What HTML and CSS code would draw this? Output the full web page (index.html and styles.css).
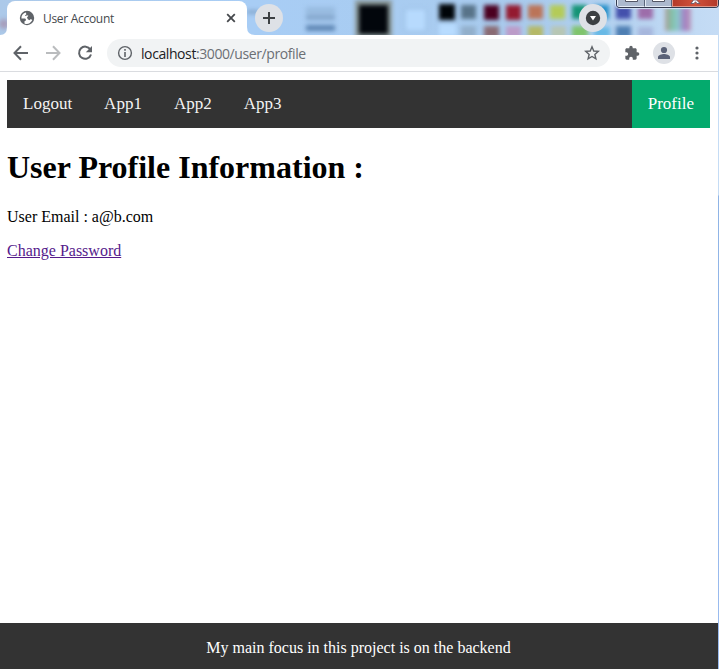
FILE: index.html
```html
<!DOCTYPE html>
<html lang="en">
<head>
<meta charset="utf-8">
<title>User Account</title>
<link rel="stylesheet" href="styles.css">
</head>
<body>
<div class="window">
  <header class="tabstrip">
    <svg class="glass" width="719" height="35" viewBox="0 0 719 35" aria-hidden="true">
      <defs>
        <linearGradient id="sky"><stop offset="0" stop-color="#acc9e9"/><stop offset=".35" stop-color="#a8cdf5"/><stop offset=".75" stop-color="#a9cbed"/><stop offset="1" stop-color="#c5dcf5"/></linearGradient>
        <linearGradient id="rainbow"><stop offset="0" stop-color="#b09c9a"/><stop offset=".25" stop-color="#83c0a5"/><stop offset=".5" stop-color="#8cc9cf"/><stop offset=".75" stop-color="#a37fc4"/><stop offset="1" stop-color="#bc9ab7"/></linearGradient>
        <filter id="soft" x="-20%" y="-50%" width="140%" height="200%" color-interpolation-filters="sRGB"><feGaussianBlur stdDeviation="2"/></filter>
      </defs>
      <rect width="719" height="35" fill="url(#sky)"/>
      <g filter="url(#soft)">
        <circle cx="4" cy="24" r="5" fill="#a89ebb"/>
        <rect x="247" y="10" width="12" height="4" fill="#86a8ce"/>
        <rect x="306" y="7" width="29" height="14" fill="#98bbe0"/>
        <rect x="306" y="16" width="29" height="3" fill="#7d9fc6"/>
        <rect x="306" y="25" width="29" height="6" fill="#6088b5"/>
        <rect x="355" y="0" width="37" height="38" fill="#8c9999"/>
        <rect x="405" y="9" width="21" height="22" fill="#b7dafd" stroke="#97bbe1"/>
        <rect x="439" y="24" width="17" height="12" fill="#b8dcff"/>
        <rect x="461" y="26" width="15" height="12" fill="#92afcb"/>
        <rect x="484" y="26" width="15" height="12" fill="#8a6a73"/>
        <rect x="506" y="26" width="15" height="12" fill="#bc9bc8"/>
        <rect x="528" y="26" width="15" height="12" fill="#b5b866"/>
        <rect x="551" y="26" width="15" height="12" fill="#b7c6b4"/>
        <rect x="572" y="26" width="16" height="12" fill="#80c46c"/>
        <rect x="594" y="27" width="16" height="11" fill="#68b9e6"/>
        <rect x="616" y="26" width="15" height="12" fill="#4e7eb2"/>
        <rect x="638" y="27" width="15" height="11" fill="#a6b6dc"/>
        <rect x="461" y="5" width="15" height="14" fill="#587389"/>
        <rect x="528" y="5" width="15" height="14" fill="#bb7458"/>
        <rect x="550" y="5" width="15" height="14" fill="#b4cb58"/>
        <rect x="572" y="5" width="15" height="14" fill="#159476"/>
        <rect x="594" y="5" width="15" height="14" fill="#258fc8"/>
        <rect x="616" y="5" width="15" height="14" fill="#4450ac"/>
        <rect x="638" y="5" width="15" height="14" fill="#9d6daa"/>
        <rect x="665" y="7" width="26" height="24" fill="url(#rainbow)"/>
      </g>
      <g filter="url(#soft)">
        <rect x="359" y="5" width="29" height="29" fill="#02060c"/>
        <rect x="439" y="4" width="16" height="16" fill="#000509"/>
        <rect x="484" y="5" width="15" height="15" fill="#4b0020"/>
        <rect x="506" y="5" width="15" height="15" fill="#941a30"/>
      </g>
    </svg>
    <div class="tab">
      <svg class="globe" width="16" height="16" viewBox="0 0 16 16"><circle cx="8" cy="8" r="7.200" fill="#5f6368"/><path d="M7 2.500C4 2.900 2.300 5.200 2.400 8.400l3.500.1c1 .3 1.200 1.200 1 2.100l-1.400.7v2.100c1.500.8 3.600.7 5-.1 1.200-.8 2.100-1.700 2.800-3.200L11.800 9l-1.300 1.200-1.700-1L8 7.500l1.400-1.700-1.300-.6-1.500.9-.7-.8 1.400-.8z" fill="#fff"/></svg>
      <span class="tab-title">User Account</span>
      <svg class="close" width="10" height="10" viewBox="0 0 10 10"><path d="m1.200 1.200 7.600 7.600m0-7.600L1.200 8.800" stroke="#45484c" stroke-width="1.800"/></svg>
    </div>
    <svg class="curves" width="264" height="8" viewBox="0 0 264 8"><path d="M0 8q7 0 7-8v8zM247 0q0 8 8 8h-8z" fill="#fff"/></svg>
    <div class="new-tab"><svg width="14" height="14" viewBox="0 0 14 14"><path d="M7 1v12M1 7h12" stroke="#3c4043" stroke-width="2"/></svg></div>
    <div class="search-tabs"><svg width="16" height="16" viewBox="0 0 16 16"><circle cx="8" cy="8" r="7.200" fill="#3c4043"/><path d="M5 6h6l-3 4.600z" fill="#fff"/></svg></div>
    <div class="caption"><span class="min"><svg width="13" height="3"><path d="M.5 0v1.500h12V0" fill="#fff" stroke="#535665"/></svg></span><span class="max"><svg width="13" height="3"><path d="M.5 0v1.500h12V0" fill="#fff" stroke="#535665"/></svg></span><span class="exit"><svg width="13" height="4"><path d="M2 3.500 4.500 0h3L11 3.500H8L6.500 1.700 5 3.500z" fill="#fff" stroke="#5a5366" stroke-width=".8"/></svg></span></div>
  </header>
  <div class="toolbar">
    <svg class="back" width="16" height="16" viewBox="0 0 16 16"><path d="M15 8H2M8 1.300 1.500 8 8 14.700" fill="none" stroke="#5f6368" stroke-width="2"/></svg>
    <svg class="forward" width="16" height="16" viewBox="0 0 16 16"><path d="M1 8h13M8 1.300 14.500 8 8 14.700" fill="none" stroke="#babcbe" stroke-width="2"/></svg>
    <svg class="reload" width="16" height="16" viewBox="0 0 16 16"><path d="M13.300 4.400A6.100 6.100 0 1 0 14 9.500" fill="none" stroke="#5f6368" stroke-width="2"/><path d="M15 1v6.300H8.800z" fill="#5f6368"/></svg>
    <div class="address">
      <svg class="info" width="16" height="16" viewBox="0 0 16 16"><circle cx="8" cy="8" r="6.400" fill="none" stroke="#5f6368" stroke-width="1.400"/><path d="M7.200 4h1.600v1.700H7.200zm0 3h1.600v5H7.200z" fill="#5f6368"/></svg>
      <span class="url">localhost<span class="path">:3000/user/profile</span></span>
      <svg class="star" width="16" height="16" viewBox="0 0 16 16"><path d="m8 1.800 1.750 4.200 4.550.4-3.450 3 1.050 4.450L8 11.500l-3.900 2.350L5.150 9.400 1.700 6.400l4.550-.4z" fill="none" stroke="#5f6368" stroke-width="1.400"/></svg>
    </div>
    <svg class="puzzle" width="16" height="16" viewBox="0 0 24 24"><path d="M20.500 11H19V7c0-1.100-.9-2-2-2h-4V3.500a2.500 2.500 0 0 0-5 0V5H4c-1.100 0-1.990.9-1.990 2v3.800H3.500c1.490 0 2.700 1.210 2.700 2.700s-1.210 2.700-2.700 2.700H2V20c0 1.100.9 2 2 2h3.800v-1.500c0-1.490 1.210-2.700 2.700-2.700s2.700 1.210 2.700 2.700V22H17c1.100 0 2-.9 2-2v-4h1.500a2.500 2.500 0 0 0 0-5z" fill="#5f6368"/></svg>
    <div class="avatar"><svg width="14" height="14" viewBox="0 0 14 14"><circle cx="7" cy="4" r="3.100" fill="#5a6278"/><path d="M1 13v-2c0-2 4-3 6-3s6 1 6 3v2z" fill="#5a6278"/></svg></div>
    <svg class="more" width="4" height="14" viewBox="0 0 4 14"><g fill="#5f6368"><circle cx="2" cy="2" r="1.600"/><circle cx="2" cy="7" r="1.600"/><circle cx="2" cy="12" r="1.600"/></g></svg>
  </div>
  <main class="page">
    <nav class="nav">
      <a>Logout</a><a>App1</a><a>App2</a><a>App3</a><a class="active">Profile</a>
    </nav>
    <h1>User Profile Information :</h1>
    <p>User Email : a@b.com</p>
    <a class="link">Change Password</a>
  </main>
  <footer class="footer">My main focus in this project is on the backend</footer>
</div>
</body>
</html>
```

FILE: styles.css
```css
* { box-sizing: border-box; }
html, body { margin: 0; height: 100%; }
body { overflow: hidden; background: linear-gradient(#c5dcf5 0, #c5dcf5 195px, #8fb4e6 196px, #9bbcf0 100%); font: 16px "Liberation Serif", serif; color: #000; }
svg { display: block; flex: none; }
.window { width: 719px; height: 669px; display: flex; flex-direction: column; }
.tabstrip { position: relative; height: 35px; flex: none; display: flex; align-items: flex-start; padding-left: 7px; }
.glass { position: absolute; left: 0; top: 0; }
.curves { position: absolute; left: 0; top: 27px; }
.tab { position: relative; width: 240px; height: 34px; margin-top: 1px; background: #fff; border-radius: 8px 8px 0 0; display: flex; align-items: center; padding: 0 11px 0 12px; font: 12px "Open Sans", sans-serif; color: #45494d; }
.tab-title { margin-left: 8px; flex: 1; letter-spacing: -.3px; white-space: nowrap; }
.new-tab, .search-tabs { position: relative; width: 28px; height: 28px; margin-top: 4px; border-radius: 50%; background: #dee1e6; display: flex; align-items: center; justify-content: center; }
.new-tab { margin-left: 8px; }
.search-tabs { margin-left: 296px; }
.caption { position: absolute; left: 616px; top: 0; width: 103px; height: 8px; display: flex; border: 1px solid #343b50; border-top: 0; border-radius: 0 0 4px 4px; overflow: hidden; box-shadow: 0 0 1px 1px #d4e4f7; }
.caption span { display: flex; justify-content: center; border: 1px solid #e3eaf5; border-top: 0; background: #acb9ce; }
.caption .min, .caption .max { width: 28px; border-right-color: #59647b; }
.caption .max { width: 27px; }
.caption .exit { flex: 1; background: linear-gradient(90deg, #b43a29, #d1523b 50%, #b43a29); border-color: #df9586; }
.toolbar { width: 718px; height: 37px; flex: none; background: #fff; border-bottom: 1px solid #dadce0; display: flex; align-items: center; padding-left: 13px; }
.forward, .reload { margin-left: 16px; }
.address { width: 503px; height: 28px; margin-left: 14px; border-radius: 14px; background: #f1f3f4; display: flex; align-items: center; padding: 0 10px; font: 14px "Open Sans", sans-serif; color: #202124; }
.url { margin-left: 8px; flex: 1; letter-spacing: -.41px; white-space: nowrap; }
.path { color: #6b6f74; }
.puzzle { margin-left: 14px; }
.avatar { width: 22px; height: 22px; margin-left: 13px; border-radius: 50%; background: #dee1e6; display: flex; align-items: center; justify-content: center; }
.more { margin-left: 20px; }
.page { width: 718px; flex: 1; background: #fff; padding: 8px 8px 0 7px; }
.nav { height: 48px; background: #333; display: flex; font-size: 17px; line-height: 20px; color: #f2f2f2; }
.nav a { padding: 14px 16px; }
.nav .active { margin-left: auto; background: #04aa6d; color: #fff; }
h1 { margin: 21px 0 22px; font-size: 32px; line-height: 37px; }
p { margin: 0 0 16px; line-height: 18px; }
.link { color: #551a8b; text-decoration: underline; line-height: 18px; }
.footer { width: 718px; height: 46px; flex: none; background: #333; color: #fff; text-align: center; line-height: 50px; padding-right: 1px; }
```
